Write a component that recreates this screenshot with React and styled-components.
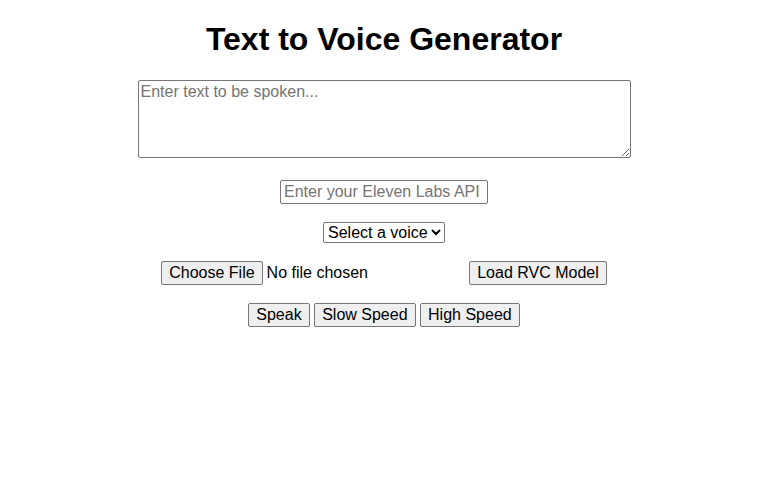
import React, { useState } from 'react'
import styled, { createGlobalStyle } from 'styled-components'

const GlobalStyle = createGlobalStyle`
    body{
        margin: 0;
        background: #fff;
        font-family: "Liberation Sans", Arial, sans-serif;
        color: #000;
    }
`

const voices = ['Rachel', 'Domi', 'Bella', 'Antoni', 'Josh']

function App() {
    const [text, setText] = useState('')
    const [apiKey, setApiKey] = useState('')
    const [voice, setVoice] = useState('')
    return (
        <Page>
            <GlobalStyle/>
            <Title>Text to Voice Generator</Title>
            <TextBox placeholder='Enter text to be spoken...' value={text} onChange={(e)=>setText(e.target.value)}/>
            <KeyInput type="text" placeholder='Enter your Eleven Labs API Key' value={apiKey} onChange={(e)=>setApiKey(e.target.value)}/>
            <VoiceSelect value={voice} onChange={(e)=>setVoice(e.target.value)}>
                <option value="">Select a voice</option>
                {voices.map((v)=><option key={v} value={v}>{v}</option>)}
            </VoiceSelect>
            <Row>
                <FileInput type="file" accept=".pth,.zip"/>
                <Button>Load RVC Model</Button>
            </Row>
            <Row gap={4}>
                <Button wide>Speak</Button>
                <Button>Slow Speed</Button>
                <Button wide>High Speed</Button>
            </Row>
        </Page>
    )
}

export default App

const Page = styled.div`
    display: flex;
    flex-direction: column;
    align-items: center;
    padding-top: 21px;
`

const Title = styled.h1`
    margin: 0 0 22px;
    font-size: 32px;
    font-weight: bold;
    line-height: 37px;
`

const TextBox = styled.textarea`
    box-sizing: border-box;
    width: 493px;
    height: 78px;
    margin: 0 0 22px;
    padding: 2px;
    border: 1px solid #767676;
    border-radius: 2px;
    font-family: "Liberation Sans", Arial, sans-serif;
    font-size: 16px;
    &::placeholder{
        color: #757575;
    }
`

const KeyInput = styled.input`
    box-sizing: border-box;
    width: 208px;
    height: 24px;
    margin: 0 0 18px;
    padding: 1px 3px;
    border: 1px solid #767676;
    border-radius: 2px;
    font-family: "Liberation Sans", Arial, sans-serif;
    font-size: 16px;
    &::placeholder{
        color: #757575;
    }
`

const VoiceSelect = styled.select`
    box-sizing: border-box;
    width: 122px;
    height: 21px;
    margin: 0 0 18px;
    border: 1px solid #767676;
    border-radius: 2px;
    background: #fff;
    color: #000;
    font-family: "Liberation Sans", Arial, sans-serif;
    font-size: 16px;
`

const Row = styled.div`
    display: flex;
    align-items: center;
    gap: ${props=>props.gap ?? 4}px;
    margin: 0 0 18px;
`

const FileInput = styled.input`
    width: 304px;
    height: 24px;
    font-family: "Liberation Sans", Arial, sans-serif;
    font-size: 16px;
    &::file-selector-button{
        height: 24px;
        padding: 1px 7px;
        margin-right: 4px;
        border: 1px solid #767676;
        border-radius: 2px;
        background: #efefef;
        font-family: "Liberation Sans", Arial, sans-serif;
        font-size: 16px;
        color: #000;
    }
`

const Button = styled.button`
    box-sizing: border-box;
    height: 24px;
    padding: 1px ${props=>props.wide ? '7.5px' : '7px'};
    border: 1px solid #767676;
    border-radius: 2px;
    background: #efefef;
    color: #000;
    font-family: "Liberation Sans", Arial, sans-serif;
    font-size: 16px;
    cursor: pointer;
`
